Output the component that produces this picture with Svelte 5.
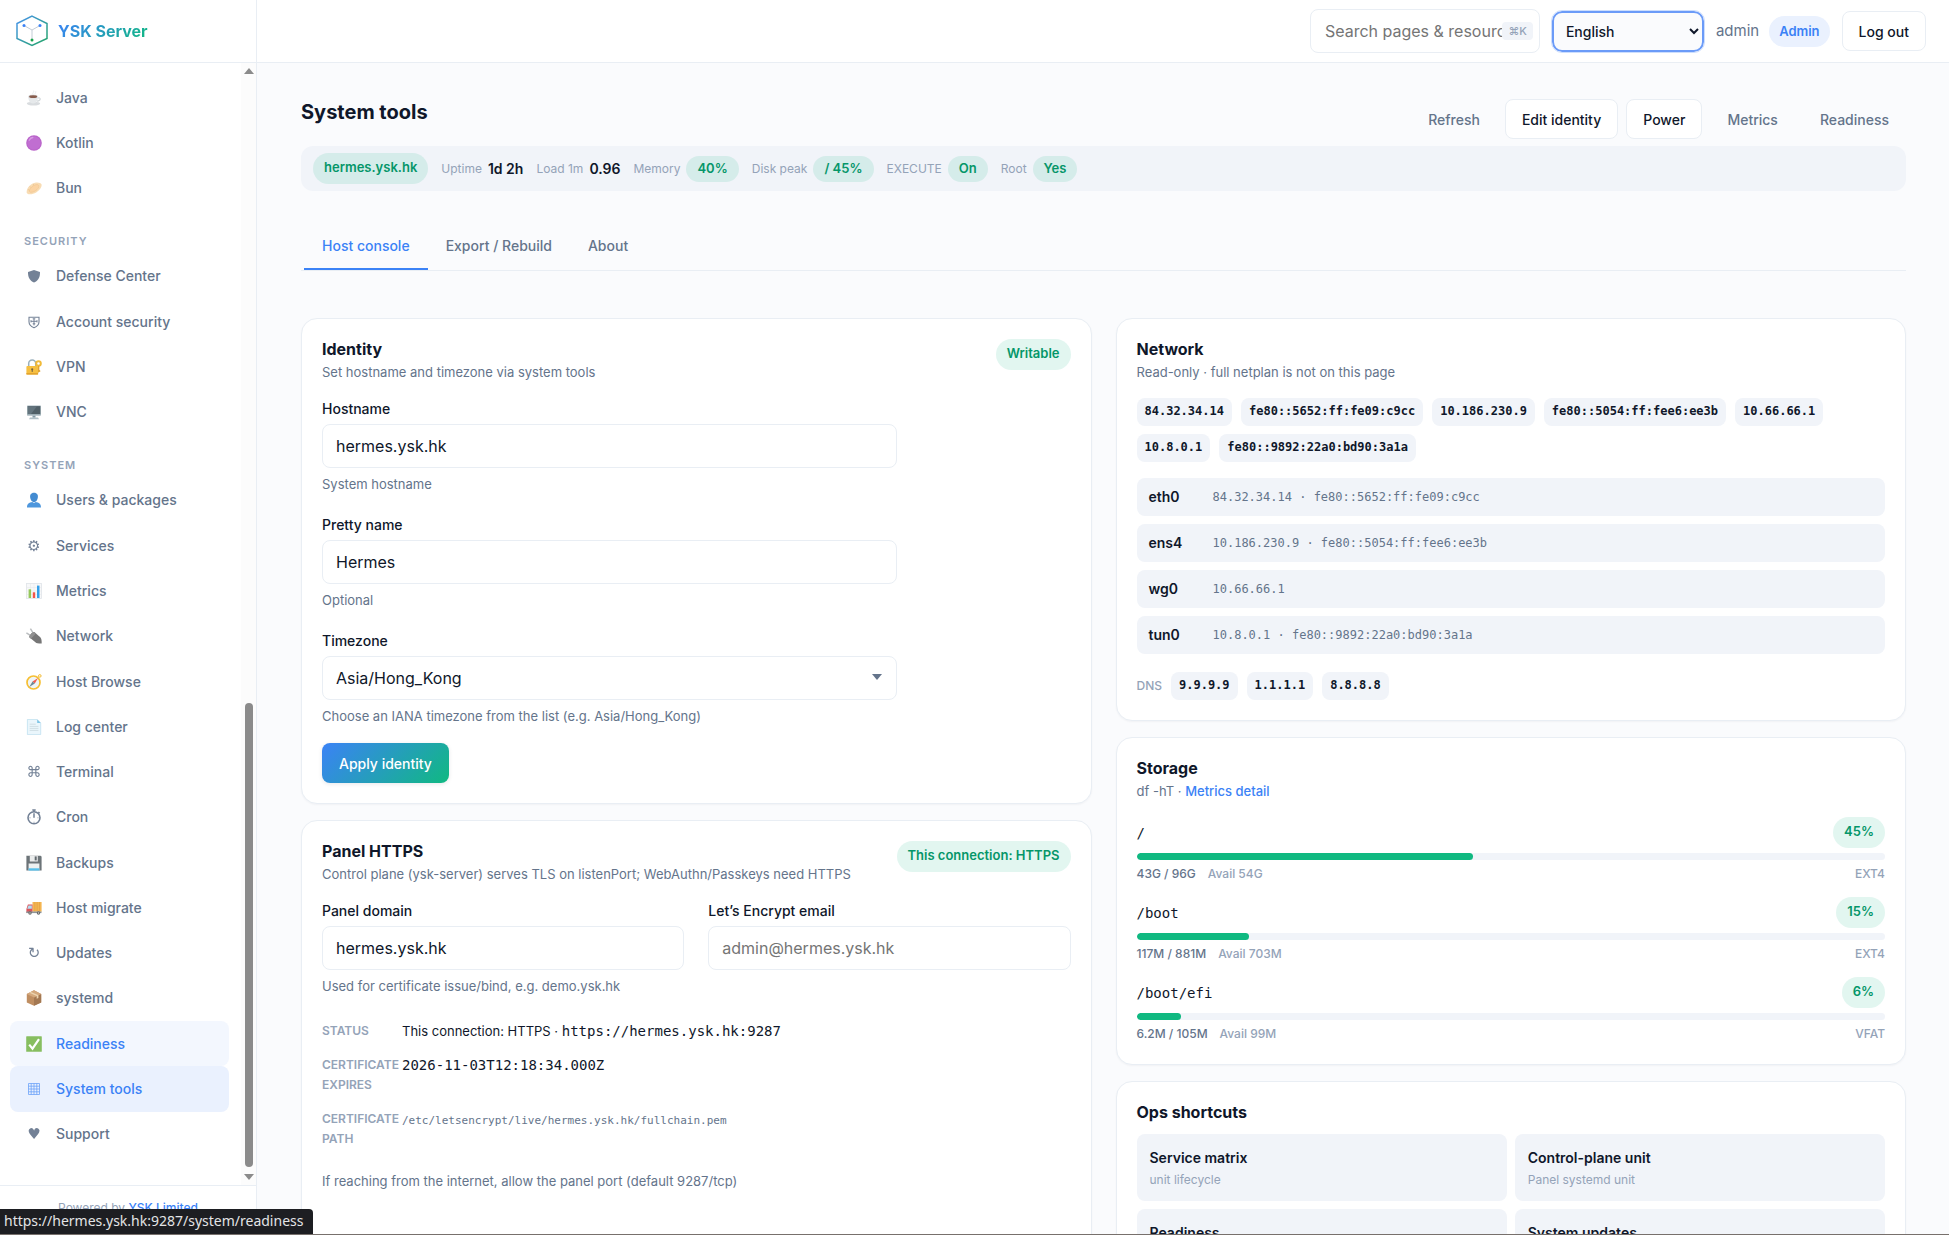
<script>
  // glyph: plain symbol, art: inline svg content on a 16x16 grid
  const art = {
    java: '<ellipse cx="7.5" cy="13.6" rx="6.7" ry="1.9" fill="#d5d9dc"/><path d="M2.3 6.6h9.6c0 3.8-1.4 7-4.8 7s-4.8-3.2-4.8-7z" fill="#e4e7e9"/><path d="M11.6 8c3.4-1 3.8 2.6-.6 3.2" fill="none" stroke="#cfd4d7" stroke-width="1.2"/><ellipse cx="7.1" cy="6.6" rx="4.8" ry="2" fill="#d9dcde"/><ellipse cx="7.1" cy="6.7" rx="4" ry="1.4" fill="#7b4b3a"/><path d="M7 4.4c-1.2-1.4 1.6-2 .6-3.8M9.3 4c-.7-1 1.2-1.6.5-2.8" fill="none" stroke="#dfe4e8" stroke-width=".8"/>',
    kotlin: '<circle cx="8" cy="8" r="7.8" fill="#b254c4"/><circle cx="8" cy="8" r="6.6" fill="#ba5fcd"/><path d="M3.2 5.2c.9-1.8 2.2-2.6 3.6-2.7" fill="none" stroke="#d492e2" stroke-width="1.3" stroke-linecap="round"/>',
    bun: '<path d="M.6 12.400C.8 7.800 4.600 3.200 10 2.600c3-.2 5.200.6 5.600 2 .5 2.400-2 5.800-5.400 7.800-3.600 2.200-8.800 2.700-9.600 0z" fill="#f8d9ac"/><path d="M3.300 11.200C3.800 7.800 7.200 4.800 10.800 4.600c2.800 0 2.600 2.600.2 5-2.400 2.400-7.300 3.800-7.700 1.600z" fill="#fbcf98" stroke="#eebd82" stroke-width=".6"/><path d="M1.800 9.400l1.500.8M4 6.400l1 1.200M7.200 3.900l.6 1.300" stroke="#e6b67c" stroke-width=".6"/>',
    shield: '<path d="M8 2l6 2c.1 5-1.300 8.200-6 10.600C3.300 12.200 1.900 9 2 4z" fill="#64748b"/>',
    account: '<path d="M3 3.200h10v4.600c0 3.200-2.500 5-5 6-2.500-1-5-2.800-5-6z" fill="none" stroke="#64748b" stroke-width="1.100"/><path d="M8 4.800v6.600M5 7.300h6M6.700 4.800h2.600M6.700 9.800h2.600M5 6.200v2.200M11 6.200v2.200" stroke="#64748b"/>',
    vpn: '<path d="M2.700 8V4.400a3.500 3.500 0 0 1 7 0V8" fill="none" stroke="#8ea7b4" stroke-width="1.500"/><rect x=".4" y="7" width="11.700" height="8.600" rx="1" fill="#f6b92c"/><path d="M.4 14h11.700v1.600H.4z" fill="#df9a1a"/><circle cx="6.200" cy="10.300" r="1.100" fill="#69552e"/><path d="M5.700 10.500h1v2.600h-1z" fill="#69552e"/><circle cx="12.500" cy="4.500" r="2.300" fill="none" stroke="#f0b324" stroke-width="2"/><path d="M12.700 7v5.500l1.500-.9" fill="none" stroke="#d99517" stroke-width="1.300"/>',
    vnc: '<rect x="1" y="1.500" width="14" height="10.200" rx=".7" fill="#9eb0b8"/><rect x="1.700" y="2.100" width="12.600" height="8" fill="#3f4f58"/><path d="M2 2.300h9L5 10H2z" fill="#536570"/><path d="M6.500 11.700h3v2h-3z" fill="#78909c"/><path d="M4 13.500h8l1 1.800H3z" fill="#a9bac2"/>',
    users: '<path d="M8 .7c3.200 0 4.300 2.300 3.800 5.100C11.300 8.500 9.900 10.200 8 10.200S4.700 8.500 4.200 5.800C3.700 3 4.800.7 8 .7z" fill="#2f7fcd"/><path d="M1 15.500c0-3.600 2.100-5 5.300-5.400l1.700 1 1.700-1c3.200.4 5.300 1.800 5.300 5.400z" fill="#3b8cda"/>',
    metrics: '<rect x=".5" y=".5" width="15" height="15" fill="#f7f8f9" stroke="#dde2e6" stroke-width=".8"/><path d="M4.500 1v14M8 1v14M11.500 1v14M1 4.500h14M1 8h14M1 11.500h14" stroke="#e2e6e9" stroke-width=".5"/><path d="M2.600 6.300h2.500V15H2.600z" fill="#8bc34a"/><path d="M6.800 9.300h2.400V15H6.800z" fill="#f44336"/><path d="M11 2.600h2.500V15H11z" fill="#1e96e8"/>',
    network: '<path d="M4.400.7l2.500 4M.4 4.800l3.900 2.600" stroke="#b4b8ba" stroke-width="1.500"/><path d="M3.300 9.300c-.4-1.400 3.300-6 5-5.200l6 5.100c1 1 1.500 3 1.400 6.400-3.900 0-5.200-.4-6.300-1.400z" fill="#686868"/><path d="M3.300 9.300c-.4-1.400 3.300-6 5-5.200l1.600 1.300-5 5.300z" fill="#858585"/>',
    browse: '<circle cx="7.500" cy="8.500" r="6.500" fill="#eef4f7" stroke="#f6b91e" stroke-width="1.700"/><circle cx="13.800" cy="1.900" r="1.300" fill="none" stroke="#f1b21b" stroke-width="1"/><path d="M12 4L8.800 9.600 6.500 7.500z" fill="#ef4b3e"/><path d="M3.300 13L6.500 7.500l2.300 2.100z" fill="#5c7c8c"/>',
    log: '<path d="M1.400.4h9.800l3.500 3.500v11.700H1.400z" fill="#e8f6fc" stroke="#b7dcee" stroke-width=".8"/><path d="M11.200.4v3.500h3.500z" fill="#71bfe3"/><path d="M3.700 5.200h6M3.700 7.400h8.700M3.700 9.400h8.700M3.700 11.400h8.700" stroke="#b8c7cf" stroke-width=".6"/>',
    cron: '<circle cx="8" cy="8.800" r="6" fill="none" stroke="#64748b" stroke-width="1.600"/><path d="M6.300.9h3.400M8 .9v2M12.300 3l1.400 1.200M8 8.800V4.300" stroke="#64748b" stroke-width="1.500"/><path d="M8 12.800v.8M3.600 8.800h.8M11.600 8.800h.8" stroke="#64748b"/>',
    backups: '<path d="M.4.700h14.200l1 1v13.900H.4z" fill="#5d656a"/><path d="M3.800.700h8v5.900h-8z" fill="#e8eaeb"/><path d="M8.700 1.400h2v4h-2z" fill="#535b60"/><path d="M2.600 8.500h10.800v7.100H2.600z" fill="#eceff0"/><path d="M2.600 13.300h10.800v2.300H2.600z" fill="#44b8e8"/>',
    migrate: '<path d="M6.500 2h9.100v9.700H6.500z" fill="#f3ad3f"/><path d="M8.800 2v9.700M11.200 2v9.700M13.500 2v9.700" stroke="#d78d2b" stroke-width=".5"/><path d="M1.900 4.600h4.600v8.100H.4V8.900z" fill="#d8434a"/><path d="M2.500 5.500h3.300v3.300H1.200z" fill="#a7dcf3"/><path d="M.3 11.500h15.200v1.600H.3z" fill="#828a8e"/><circle cx="4" cy="13" r="1.700" fill="#555"/><circle cx="12.500" cy="13" r="1.700" fill="#555"/><circle cx="4" cy="13" r=".7" fill="#ccc"/><circle cx="12.500" cy="13" r=".7" fill="#ccc"/>',
    systemd: '<path d="M.8 4l7.200-3.700L15.200 4v8.600L8 15.800.8 12.600z" fill="#b98251"/><path d="M8 7.400V15.800l7.200-3.200V4z" fill="#9a6a40"/><path d="M.8 4L8 .3 15.200 4 8 7.400z" fill="#d0a070"/><path d="M3.400 2.700l7.300 3.400v2.700l1.700-.9V5.300L5 1.900z" fill="#ead0a8"/>',
    readiness: '<rect x=".2" y=".2" width="15.600" height="15.600" rx=".6" fill="#7cb850"/><path d="M3.200 8.600l3.300 4L13 3.200" fill="none" stroke="#fff" stroke-width="2.200"/>',
    tools: '<path d="M2.500 2.500h11v11h-11zM5.200 2.500v11M8 2.500v11M10.800 2.500v11M2.500 5.200h11M2.500 8h11M2.500 10.800h11" fill="none" stroke="#5f9af8" stroke-width=".8"/>'
  };

  const nav = [
    { label: 'Java', art: art.java },
    { label: 'Kotlin', art: art.kotlin },
    { label: 'Bun', art: art.bun },
    { heading: 'Security' },
    { label: 'Defense Center', art: art.shield },
    { label: 'Account security', art: art.account },
    { label: 'VPN', art: art.vpn },
    { label: 'VNC', art: art.vnc },
    { heading: 'System' },
    { label: 'Users & packages', art: art.users },
    { label: 'Services', glyph: '⚙' },
    { label: 'Metrics', art: art.metrics },
    { label: 'Network', art: art.network },
    { label: 'Host Browse', art: art.browse },
    { label: 'Log center', art: art.log },
    { label: 'Terminal', glyph: '⌘' },
    { label: 'Cron', art: art.cron },
    { label: 'Backups', art: art.backups },
    { label: 'Host migrate', art: art.migrate },
    { label: 'Updates', glyph: '↻' },
    { label: 'systemd', art: art.systemd },
    { label: 'Readiness', art: art.readiness, hover: true },
    { label: 'System tools', art: art.tools, active: true },
    { label: 'Support', glyph: '♥' }
  ];

  const tabs = ['Host console', 'Export / Rebuild', 'About'];
  let tab = $state('Host console');

  let hostname = $state('hermes.ysk.hk');
  let prettyName = $state('Hermes');
  let domain = $state('hermes.ysk.hk');

  const addresses = [
    '84.32.34.14',
    'fe80::5652:ff:fe09:c9cc',
    '10.186.230.9',
    'fe80::5054:ff:fee6:ee3b',
    '10.66.66.1',
    '10.8.0.1',
    'fe80::9892:22a0:bd90:3a1a'
  ];

  const interfaces = [
    { name: 'eth0', addr: '84.32.34.14 · fe80::5652:ff:fe09:c9cc' },
    { name: 'ens4', addr: '10.186.230.9 · fe80::5054:ff:fee6:ee3b' },
    { name: 'wg0', addr: '10.66.66.1' },
    { name: 'tun0', addr: '10.8.0.1 · fe80::9892:22a0:bd90:3a1a' }
  ];

  const dns = ['9.9.9.9', '1.1.1.1', '8.8.8.8'];

  const disks = [
    { mount: '/', pct: 45, used: '43G / 96G', avail: '54G', type: 'EXT4' },
    { mount: '/boot', pct: 15, used: '117M / 881M', avail: '703M', type: 'EXT4' },
    { mount: '/boot/efi', pct: 6, used: '6.2M / 105M', avail: '99M', type: 'VFAT' }
  ];

  const shortcuts = [
    { title: 'Service matrix', sub: 'unit lifecycle' },
    { title: 'Control-plane unit', sub: 'Panel systemd unit' },
    { title: 'Readiness' },
    { title: 'System updates' }
  ];
</script>

<div class="shell">
  <aside class="sidebar">
    <a class="brand" href="#home">
      <svg width="32" height="32" viewBox="0 0 32 32" fill="none">
        <defs>
          <linearGradient id="hex" x1="0" y1="0" x2="1" y2="1">
            <stop offset="0" stop-color="#4a94f0" />
            <stop offset="1" stop-color="#22a565" />
          </linearGradient>
        </defs>
        <path d="M16 1.200L31 8.500v15L16 30.500 1 23.500v-15z" stroke="url(#hex)" stroke-width="1.500" />
        <path d="M8 10.500l8 4.500 8-4.500M16 15v10" stroke="#c3ccd6" stroke-width="1" />
        <circle cx="8" cy="10.500" r="1.500" fill="#3b82f6" />
        <circle cx="24" cy="10.500" r="1.500" fill="#3b82f6" />
        <circle cx="16" cy="25" r="1.500" fill="#16a34a" />
      </svg>
      <span>YSK Server</span>
    </a>

    <div class="nav-wrap">
      <nav>
        {#each nav as item}
          {#if item.heading}
            <h2>{item.heading}</h2>
          {:else}
            <a href="#nav" class="item" class:active={item.active} class:hover={item.hover}>
              <span class="icon">
                {#if item.art}
                  <svg width="16" height="16" viewBox="0 0 16 16">{@html item.art}</svg>
                {:else}
                  {item.glyph}
                {/if}
              </span>
              {item.label}
            </a>
          {/if}
        {/each}
      </nav>
      <div class="scroll">
        <svg width="10" height="6" viewBox="0 0 10 6"><path d="M0 6l5-6 5 6z" fill="#8b8b8b" /></svg>
        <div class="track"><div class="thumb"></div></div>
        <svg width="10" height="6" viewBox="0 0 10 6"><path d="M0 0l5 6 5-6z" fill="#8b8b8b" /></svg>
      </div>
    </div>

    <footer>Powered by <a href="#ysk">YSK Limited</a></footer>
  </aside>

  <div class="page">
    <header class="topbar">
      <div class="search">
        <input type="text" placeholder="Search pages & resources" aria-label="Search" />
        <kbd>⌘K</kbd>
      </div>
      <select class="lang" aria-label="Language">
        <option>English</option>
      </select>
      <span class="user">admin</span>
      <span class="role">Admin</span>
      <button class="btn">Log out</button>
    </header>

    <main>
      <div class="page-head">
        <h1>System tools</h1>
        <div class="actions">
          <button class="btn ghost">Refresh</button>
          <button class="btn">Edit identity</button>
          <button class="btn">Power</button>
          <button class="btn ghost">Metrics</button>
          <button class="btn ghost">Readiness</button>
        </div>
      </div>

      <div class="stats">
        <span class="pill">hermes.ysk.hk</span>
        <span class="stat">Uptime <b>1d 2h</b></span>
        <span class="stat">Load 1m <b>0.96</b></span>
        <span class="stat">Memory <span class="pill small">40%</span></span>
        <span class="stat">Disk peak <span class="pill small">/ 45%</span></span>
        <span class="stat">EXECUTE <span class="pill small">On</span></span>
        <span class="stat">Root <span class="pill small">Yes</span></span>
      </div>

      <div class="tabs" role="tablist">
        {#each tabs as name}
          <button role="tab" aria-selected={tab === name} class:current={tab === name} onclick={() => (tab = name)}>{name}</button>
        {/each}
      </div>

      <div class="columns">
        <div class="column">
          <section class="card">
            <div class="card-head">
              <div>
                <h3>Identity</h3>
                <p>Set hostname and timezone via system tools</p>
              </div>
              <span class="pill">Writable</span>
            </div>
            <div class="fields">
              <div class="field">
                <label for="hostname">Hostname</label>
                <input id="hostname" type="text" bind:value={hostname} />
                <small>System hostname</small>
              </div>
              <div class="field">
                <label for="pretty">Pretty name</label>
                <input id="pretty" type="text" bind:value={prettyName} />
                <small>Optional</small>
              </div>
              <div class="field">
                <label for="tz">Timezone</label>
                <div class="select">
                  <select id="tz">
                    <option>Asia/Hong_Kong</option>
                  </select>
                  <svg width="10" height="6" viewBox="0 0 10 6"><path d="M0 0h10L5 6z" fill="#64748b" /></svg>
                </div>
                <small>Choose an IANA timezone from the list (e.g. Asia/Hong_Kong)</small>
              </div>
            </div>
            <button class="btn primary">Apply identity</button>
          </section>

          <section class="card">
            <div class="card-head">
              <div>
                <h3>Panel HTTPS</h3>
                <p>Control plane (ysk-server) serves TLS on listenPort; WebAuthn/Passkeys need HTTPS</p>
              </div>
              <span class="pill">This connection: HTTPS</span>
            </div>
            <div class="pair">
              <div class="field">
                <label for="domain">Panel domain</label>
                <input id="domain" type="text" bind:value={domain} />
                <small>Used for certificate issue/bind, e.g. demo.ysk.hk</small>
              </div>
              <div class="field">
                <label for="email">Let’s Encrypt email</label>
                <input id="email" type="email" placeholder="admin@hermes.ysk.hk" />
              </div>
            </div>
            <dl>
              <dt>Status</dt>
              <dd>This connection: HTTPS · <code>https://hermes.ysk.hk:9287</code></dd>
              <dt>Certificate expires</dt>
              <dd><code>2026-11-03T12:18:34.000Z</code></dd>
              <dt>Certificate path</dt>
              <dd><code class="path">/etc/letsencrypt/live/hermes.ysk.hk/fullchain.pem</code></dd>
            </dl>
            <p class="note">If reaching from the internet, allow the panel port (default 9287/tcp)</p>
          </section>
        </div>

        <div class="column">
          <section class="card">
            <div class="card-head tight">
              <div>
                <h3>Network</h3>
                <p>Read-only · full netplan is not on this page</p>
              </div>
            </div>
            <div class="chips">
              {#each addresses as address}
                <code class="chip">{address}</code>
              {/each}
            </div>
            <ul class="ifaces">
              {#each interfaces as iface}
                <li><b>{iface.name}</b><code>{iface.addr}</code></li>
              {/each}
            </ul>
            <div class="chips">
              <span class="faint">DNS</span>
              {#each dns as server}
                <code class="chip">{server}</code>
              {/each}
            </div>
          </section>

          <section class="card">
            <div class="card-head tight">
              <div>
                <h3>Storage</h3>
                <p>df -hT · <a href="#metrics">Metrics detail</a></p>
              </div>
            </div>
            <div class="disks">
              {#each disks as disk}
                <div class="disk">
                  <div class="disk-head">
                    <code>{disk.mount}</code>
                    <span class="pill">{disk.pct}%</span>
                  </div>
                  <div class="bar"><div class="fill" style="width: {disk.pct}%"></div></div>
                  <div class="disk-foot">
                    <span class="used">{disk.used}</span>
                    <span>Avail {disk.avail}</span>
                    <span class="type">{disk.type}</span>
                  </div>
                </div>
              {/each}
            </div>
          </section>

          <section class="card">
            <h3>Ops shortcuts</h3>
            <div class="tiles">
              {#each shortcuts as item}
                <a class="tile" href="#ops">
                  <b>{item.title}</b>
                  {#if item.sub}<span>{item.sub}</span>{/if}
                </a>
              {/each}
            </div>
          </section>
        </div>
      </div>
    </main>
  </div>

  <div class="status">https://hermes.ysk.hk:9287/system/readiness</div>
  <div class="edge"></div>
</div>

<style>
  :global(body) {
    margin: 0;
    background: #fafbfd;
  }

  .shell {
    --text: #0f172a;
    --muted: #64748b;
    --faint: #94a3b8;
    --line: #e9eef4;
    --soft: #f1f4f9;
    --blue: #3b82f6;
    --green: #059669;
    display: flex;
    height: 100vh;
    overflow: hidden;
    font-family: Inter, 'Liberation Sans', sans-serif;
    font-size: 14px;
    line-height: 20px;
    color: var(--text);
  }

  .shell *,
  .shell {
    box-sizing: border-box;
  }

  h1,
  h2,
  h3,
  p,
  dl,
  dd,
  ul {
    margin: 0;
    padding: 0;
  }

  a {
    color: var(--blue);
    text-decoration: none;
  }

  code {
    font-family: 'DejaVu Sans Mono', monospace;
    font-size: 14px;
  }

  input,
  select,
  button {
    font-family: inherit;
    color: var(--text);
  }

  /* sidebar */
  .sidebar {
    flex: none;
    display: flex;
    flex-direction: column;
    width: 257px;
    background: #fff;
    border-right: 1px solid var(--line);
  }

  .brand {
    flex: none;
    display: flex;
    align-items: center;
    gap: 10px;
    height: 63px;
    padding: 0 16px;
    border-bottom: 1px solid var(--line);
    font-size: 16px;
    font-weight: 700;
  }

  .brand span {
    background: linear-gradient(135deg, #3b82f6, #10b981);
    background-clip: text;
    color: transparent;
  }

  .nav-wrap {
    flex: 1;
    display: flex;
    min-height: 0;
  }

  nav {
    flex: 1;
    display: flex;
    flex-direction: column;
    padding: 12px 12px 28px 10px;
  }

  nav h2 {
    flex: none;
    padding: 20px 14px 3px;
    font-size: 11px;
    font-weight: 600;
    letter-spacing: 1px;
    text-transform: uppercase;
    color: var(--faint);
  }

  .item {
    flex: 1;
    display: flex;
    align-items: center;
    gap: 12px;
    padding: 0 14px;
    border-radius: 8px;
    font-weight: 500;
    color: var(--muted);
  }

  .item.hover {
    background: #f3f7fe;
    color: var(--blue);
  }

  .item.active {
    background: #eaf1fe;
    color: var(--blue);
  }

  .icon {
    display: flex;
    justify-content: center;
    width: 20px;
    font-family: 'DejaVu Sans', sans-serif;
    font-size: 15px;
    opacity: 0.9;
  }

  .scroll {
    display: flex;
    flex-direction: column;
    align-items: center;
    width: 15px;
    padding: 5px 0;
    background: #fcfcfc;
  }

  .track {
    flex: 1;
    display: flex;
    align-items: flex-end;
    padding: 4px 0 7px;
  }

  .thumb {
    width: 8px;
    height: calc(43% - 4px);
    border-radius: 4px;
    background: #8b8b8b;
  }

  footer {
    flex: none;
    height: 50px;
    padding-top: 12px;
    border-top: 1px solid var(--line);
    font-size: 12px;
    text-align: center;
    color: var(--faint);
  }

  footer a {
    font-weight: 500;
  }

  /* top bar */
  .page {
    flex: 1;
    min-width: 0;
  }

  .topbar {
    display: flex;
    align-items: center;
    justify-content: flex-end;
    gap: 12px;
    height: 63px;
    padding: 0 23px;
    background: #fff;
    border-bottom: 1px solid var(--line);
  }

  .search {
    position: relative;
  }

  .search input {
    width: 230px;
    height: 44px;
    padding: 0 36px 0 14px;
    border: 1px solid var(--line);
    border-radius: 8px;
    background: #fff;
    font-size: 16px;
  }

  .search kbd {
    position: absolute;
    top: 13px;
    right: 7px;
    padding: 0 6px;
    border-radius: 4px;
    background: var(--soft);
    font-family: Inter, 'DejaVu Sans', sans-serif;
    font-size: 11px;
    line-height: 18px;
    font-weight: 500;
    color: var(--faint);
  }

  .lang {
    width: 152px;
    height: 41px;
    padding: 0 8px;
    border: 2px solid #6b9bf8;
    border-radius: 10px;
    outline: 1px solid #cddefd;
    background: #fafbfd;
    font-size: 14px;
    font-weight: 500;
  }

  .user {
    font-size: 15px;
    color: var(--muted);
  }

  .role {
    margin-left: -2px;
    padding: 5px 10px 6px;
    border-radius: 16px;
    background: #eaf1fe;
    font-size: 13px;
    font-weight: 600;
    color: var(--blue);
  }

  .btn {
    height: 40px;
    padding: 0 16px;
    border: 1px solid var(--line);
    border-radius: 8px;
    background: #fff;
    font-size: 14px;
    font-weight: 500;
    cursor: pointer;
  }

  .btn.ghost {
    border-color: transparent;
    background: none;
    color: var(--muted);
  }

  .btn.primary {
    border-color: transparent;
    background: linear-gradient(135deg, #3b82f6, #10b981) border-box;
    box-shadow: 0 1px 4px rgba(15, 23, 42, 0.1);
    color: #fff;
  }

  /* content */
  main {
    padding: 36px 43px 0 44px;
  }

  .page-head {
    display: flex;
    justify-content: space-between;
    margin-bottom: 7px;
  }

  h1 {
    font-size: 20px;
    line-height: 26px;
    font-weight: 700;
  }

  .actions {
    display: flex;
    gap: 8px;
  }

  .stats {
    display: flex;
    align-items: center;
    gap: 13px;
    height: 45px;
    padding: 0 12px;
    border-radius: 12px;
    background: var(--soft);
  }

  .stat {
    display: flex;
    align-items: center;
    gap: 6px;
    font-size: 12px;
    color: var(--faint);
  }

  .stat b {
    font-size: 14px;
    font-weight: 600;
    color: var(--text);
  }

  .pill {
    flex: none;
    padding: 4px 11px 7px;
    border-radius: 16px;
    background: rgba(16, 185, 129, 0.12);
    font-size: 13px;
    font-weight: 600;
    color: var(--green);
  }

  .pill.small {
    padding: 2px 11px 4px;
  }

  .tabs {
    display: flex;
    margin: 32px 0 47px;
    padding: 0 3px;
    border-bottom: 1px solid var(--line);
  }

  .tabs button {
    padding: 13px 18px 12px;
    border: 0;
    border-bottom: 2px solid transparent;
    background: none;
    font-size: 14px;
    line-height: 20px;
    font-weight: 500;
    color: var(--muted);
  }

  .tabs button.current {
    border-color: var(--blue);
    color: var(--blue);
  }

  .columns {
    display: grid;
    grid-template-columns: 1fr 1fr;
    gap: 24px;
  }

  .column {
    display: flex;
    flex-direction: column;
    gap: 16px;
    min-width: 0;
  }

  .card {
    padding: 20px;
    border: 1px solid var(--line);
    border-radius: 16px;
    background: #fff;
    box-shadow: 0 1px 2px rgba(15, 23, 42, 0.04);
  }

  .column:first-child .card:last-child {
    min-height: 440px;
  }

  .card-head {
    display: flex;
    align-items: flex-start;
    justify-content: space-between;
    margin-bottom: 16px;
  }

  .card-head.tight {
    margin-bottom: 15px;
  }

  h3 {
    font-size: 16px;
    font-weight: 700;
  }

  .card-head p {
    margin-top: 2px;
    font-size: 13px;
    line-height: 22px;
    color: var(--muted);
  }

  .card-head p a {
    font-weight: 500;
  }

  .fields {
    display: flex;
    flex-direction: column;
    gap: 20px;
    max-width: 575px;
    margin-bottom: 16px;
  }

  .field {
    display: flex;
    flex-direction: column;
    gap: 5px;
  }

  .field label {
    font-weight: 500;
  }

  .field input,
  .field select {
    width: 100%;
    height: 44px;
    padding: 0 13px;
    border: 1px solid var(--line);
    border-radius: 8px;
    background: #fff;
    font-size: 16px;
  }

  .field select {
    appearance: none;
  }

  .field small {
    font-size: 13px;
    line-height: 22px;
    color: var(--muted);
  }

  .select {
    position: relative;
  }

  .select svg {
    position: absolute;
    top: 18px;
    right: 15px;
    pointer-events: none;
  }

  .pair {
    display: grid;
    grid-template-columns: 1fr 1fr;
    gap: 24px;
  }

  dl {
    display: grid;
    grid-template-columns: 80px 1fr;
    row-gap: 14px;
    margin: 24px 0 21px;
  }

  dt {
    font-size: 12px;
    font-weight: 600;
    text-transform: uppercase;
    color: var(--faint);
  }

  dd {
    height: 20px;
    font-size: 13px;
  }

  .path {
    font-size: 11px;
    color: var(--muted);
  }

  .note {
    font-size: 13px;
    line-height: 22px;
    color: var(--muted);
  }

  .chips {
    display: flex;
    flex-wrap: wrap;
    align-items: center;
    gap: 8px 9px;
  }

  .chip {
    padding: 3px 8px 5px;
    border-radius: 8px;
    background: var(--soft);
    font-size: 12px;
    font-weight: 700;
  }

  .faint {
    font-size: 12px;
    font-weight: 500;
    color: var(--faint);
  }

  .ifaces {
    display: flex;
    flex-direction: column;
    gap: 8px;
    margin: 16px 0 18px;
    list-style: none;
  }

  .ifaces li {
    display: flex;
    align-items: center;
    height: 38px;
    padding: 0 12px;
    border-radius: 8px;
    background: var(--soft);
  }

  .ifaces b {
    width: 64px;
    font-weight: 600;
  }

  .ifaces code {
    font-size: 12px;
    color: var(--muted);
  }

  .disks {
    display: flex;
    flex-direction: column;
    gap: 13px;
  }

  .disk-head {
    display: flex;
    align-items: center;
    justify-content: space-between;
    margin-bottom: 5px;
  }

  .bar {
    height: 7px;
    border-radius: 4px;
    background: var(--soft);
    overflow: hidden;
  }

  .fill {
    height: 100%;
    border-radius: 4px;
    background: #10b981;
  }

  .disk-foot {
    display: flex;
    gap: 12px;
    margin-top: 4px;
    font-size: 12px;
    font-weight: 500;
    color: var(--faint);
  }

  .used {
    color: var(--muted);
  }

  .type {
    margin-left: auto;
  }

  .tiles {
    display: grid;
    grid-template-columns: 1fr 1fr;
    gap: 8px;
    margin-top: 12px;
  }

  .tile {
    display: flex;
    flex-direction: column;
    gap: 2px;
    padding: 14px 13px 11px;
    border-radius: 8px;
    background: var(--soft);
    color: var(--text);
  }

  .tile b {
    font-weight: 600;
  }

  .tile span {
    font-size: 12px;
    color: var(--faint);
  }

  /* link target bubble in the window corner */
  .status {
    position: fixed;
    left: 0;
    bottom: 0;
    height: 26px;
    padding: 0 10px 0 4px;
    border-top-right-radius: 4px;
    background: #1d1e22;
    font-family: 'Noto Sans', sans-serif;
    font-size: 14px;
    line-height: 24px;
    color: #e3e4e6;
  }

  .edge {
    position: fixed;
    left: 0;
    right: 0;
    bottom: 0;
    height: 1px;
    background: #77706c;
  }
</style>
